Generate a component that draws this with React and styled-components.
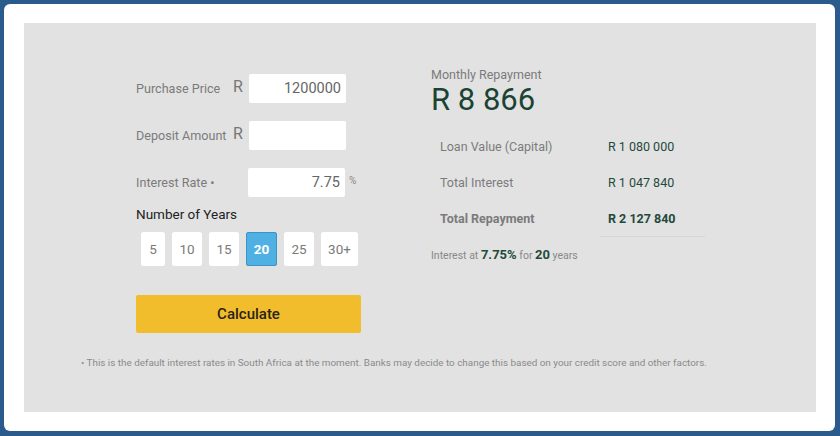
import React from "react";
import styled, { createGlobalStyle } from "styled-components";

const GlobalStyle = createGlobalStyle`
  html, body {
    margin: 0;
    padding: 0;
    background: #2b5a8d;
    font-family: Roboto, "Liberation Sans", sans-serif;
  }
`;

const Frame = styled.div`
  box-sizing: border-box;
  width: 831px;
  height: 427px;
  margin: 4px 5px 5px 4px;
  padding: 19px 19px 19px 20px;
  background: #ffffff;
  border-radius: 6px;
`;

const Panel = styled.div`
  box-sizing: border-box;
  height: 389px;
  background: #e2e2e2;
  padding-top: 44px;
`;

const Columns = styled.div`
  display: flex;
  align-items: flex-start;
  padding-left: 112px;
`;

const LeftCol = styled.div`
  width: 295px;
  padding-top: 7px;
`;

const RightCol = styled.div`
  display: flex;
  flex-direction: column;
`;

const FieldRow = styled.div`
  display: flex;
  align-items: center;
  height: 29px;
  margin-bottom: 18px;
`;

const Label = styled.span`
  width: ${(p) => p.$width || 97}px;
  font-size: 12.6px;
  color: #7b7b7b;
`;

const Unit = styled.span`
  width: 16px;
  font-size: 16px;
  color: #777;
  margin-bottom: 5px;
`;

const Suffix = styled.span`
  margin-left: 4px;
  margin-bottom: 5px;
  font-size: 10px;
  color: #888;
`;

const Input = styled.div`
  box-sizing: border-box;
  width: 97px;
  height: 29px;
  background: #fff;
  border-radius: 2px;
  padding-right: 5px;
  display: flex;
  align-items: center;
  justify-content: flex-end;
  font-size: 14.5px;
  color: #666;
`;

const YearsTitle = styled.div`
  margin-top: -9px;
  font-size: 13.5px;
  line-height: 16px;
  color: #222;
`;

const YearList = styled.div`
  display: flex;
  gap: 7px;
  margin: 10px 0 0 5px;
`;

const YearButton = styled.div`
  box-sizing: border-box;
  width: ${(p) => p.$width}px;
  height: 34px;
  display: flex;
  align-items: center;
  justify-content: center;
  border-radius: 2px;
  font-size: 13.5px;
  background: ${(p) => (p.$active ? "#4fb1e3" : "#fff")};
  border: 1px solid ${(p) => (p.$active ? "#3d93c4" : "#fff")};
  color: ${(p) => (p.$active ? "#fff" : "#7a7a7a")};
  font-weight: ${(p) => (p.$active ? 700 : 400)};
`;

const CalcButton = styled.div`
  width: 225px;
  height: 38px;
  margin-top: 29px;
  background: #f1bd2d;
  border-radius: 2px;
  display: flex;
  align-items: center;
  justify-content: center;
  font-size: 15px;
  font-weight: 500;
  color: #2a2418;
`;

const Caption = styled.div`
  font-size: 12.5px;
  line-height: 15px;
  color: #7b7b7b;
`;

const BigAmount = styled.div`
  margin-top: 2px;
  font-size: 31px;
  line-height: 32px;
  color: #1b4333;
`;

const Table = styled.div`
  display: grid;
  grid-template-columns: 169px 105px;
  margin-top: 13px;
`;

const Cell = styled.div`
  box-sizing: border-box;
  height: 36px;
  display: flex;
  align-items: center;
  padding-left: ${(p) => (p.$value ? 8 : 9)}px;
  font-size: 12.5px;
  font-weight: ${(p) => (p.$bold ? 700 : 400)};
  color: ${(p) => (p.$value ? "#1f4a3b" : "#7b7b7b")};
  border-bottom: 1px solid ${(p) => (p.$line ? "#d6d6d6" : "transparent")};
`;

const Summary = styled.div`
  margin-top: 10px;
  font-size: 10.5px;
  color: #888;

  b {
    font-size: 13px;
    color: #1f4a3b;
  }
`;

const Footnote = styled.div`
  margin: 24px 0 0 57px;
  font-size: 9.9px;
  color: #8a8a8a;
`;

const years = [
  { v: "5", w: 24 },
  { v: "10", w: 30 },
  { v: "15", w: 30 },
  { v: "20", w: 31, active: true },
  { v: "25", w: 30 },
  { v: "30+", w: 37 },
];

export default function App() {
  return (
    <>
      <GlobalStyle />
      <Frame>
        <Panel>
          <Columns>
            <LeftCol>
              <FieldRow>
                <Label>Purchase Price</Label>
                <Unit>R</Unit>
                <Input>1200000</Input>
              </FieldRow>
              <FieldRow>
                <Label>Deposit Amount</Label>
                <Unit>R</Unit>
                <Input />
              </FieldRow>
              <FieldRow>
                <Label $width={112}>Interest Rate •</Label>
                <Input>7.75</Input>
                <Suffix>%</Suffix>
              </FieldRow>
              <YearsTitle>Number of Years</YearsTitle>
              <YearList>
                {years.map((y) => (
                  <YearButton key={y.v} $width={y.w} $active={y.active}>
                    {y.v}
                  </YearButton>
                ))}
              </YearList>
              <CalcButton>Calculate</CalcButton>
            </LeftCol>
            <RightCol>
              <Caption>Monthly Repayment</Caption>
              <BigAmount>R 8 866</BigAmount>
              <Table>
                <Cell>Loan Value (Capital)</Cell>
                <Cell $value>R 1 080 000</Cell>
                <Cell>Total Interest</Cell>
                <Cell $value>R 1 047 840</Cell>
                <Cell $bold>Total Repayment</Cell>
                <Cell $value $bold $line>R 2 127 840</Cell>
              </Table>
              <Summary>
                Interest at <b>7.75%</b> for <b>20</b> years
              </Summary>
            </RightCol>
          </Columns>
          <Footnote>
            • This is the default interest rates in South Africa at the moment. Banks may decide to change this based on your credit score and other factors.
          </Footnote>
        </Panel>
      </Frame>
    </>
  );
}
